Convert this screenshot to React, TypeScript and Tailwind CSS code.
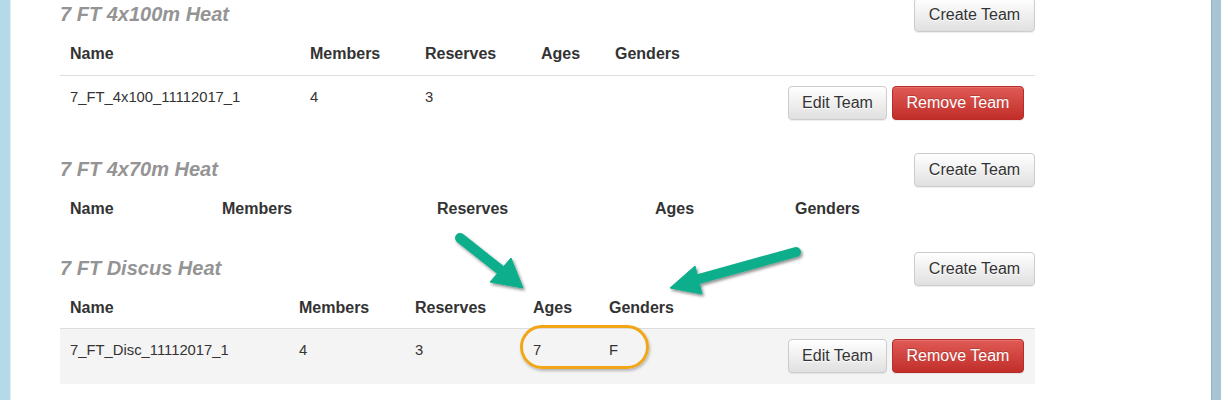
import React from "react";

type Row = { name: string; members: string; reserves: string; ages: string; genders: string };

type Section = {
  title: string;
  widths: number[];
  rows: Row[];
  shaded?: boolean;
};

const sections: Section[] = [
  {
    title: "7 FT 4x100m Heat",
    widths: [240, 115, 116, 74, 110],
    rows: [{ name: "7_FT_4x100_11112017_1", members: "4", reserves: "3", ages: "", genders: "" }],
  },
  {
    title: "7 FT 4x70m Heat",
    widths: [152, 215, 218, 140],
    rows: [],
  },
  {
    title: "7 FT Discus Heat",
    widths: [229, 116, 118, 76, 110],
    rows: [{ name: "7_FT_Disc_11112017_1", members: "4", reserves: "3", ages: "7", genders: "F" }],
    shaded: true,
  },
];

const btnDefault =
  "h-[34px] px-[13px] rounded-[4px] border border-[#ccc] bg-[linear-gradient(to_bottom,#ffffff,#e0e0e0)] text-[16px] leading-none text-[#333] [text-shadow:0_1px_0_#fff] shadow-[inset_0_1px_0_rgba(255,255,255,0.15),0_1px_1px_rgba(0,0,0,0.075)]";
const btnDanger =
  "h-[34px] px-[13px] rounded-[4px] border border-[#b92c28] bg-[linear-gradient(to_bottom,#e05a55,#c12e2a)] text-[16px] leading-none text-white [text-shadow:0_-1px_0_rgba(0,0,0,0.2)] shadow-[inset_0_1px_0_rgba(255,255,255,0.15),0_1px_1px_rgba(0,0,0,0.075)]";

function HeatSection({ s, first }: { s: Section; first?: boolean }) {
  const hasActions = s.widths.length === 5;
  return (
    <div className={first ? "-mt-[2px] mb-[22px]" : "mb-[22px]"}>
      <div className="flex items-center justify-between h-[34px]">
        <h4 className="text-[20px] leading-[22px] font-bold italic text-[#949494] mb-[2px]">{s.title}</h4>
        <button className={btnDefault + " w-[121px]"}>Create Team</button>
      </div>
      <table className="w-full table-fixed border-collapse">
        <colgroup>
          {s.widths.map((w, i) => (
            <col key={i} style={{ width: w }} />
          ))}
          <col />
        </colgroup>
        <thead>
          <tr className="h-[43px]">
            {["Name", "Members", "Reserves", "Ages", "Genders"].map((h) => (
              <th key={h} className="px-[10px] pt-[2px] text-left align-middle text-[16px] leading-[22px] font-bold text-[#333]">
                {h}
              </th>
            ))}
            {hasActions && <th />}
          </tr>
        </thead>
        <tbody>
          {s.rows.map((r) => (
            <tr key={r.name} className={s.shaded ? "bg-[#f4f4f4]" : ""}>
              {[r.name, r.members, r.reserves, r.ages, r.genders].map((v, i) => (
                <td
                  key={i}
                  className="border-t border-[#ddd] px-[10px] pt-[11px] pb-[10px] align-top text-[14.8px] leading-[20px] text-[#333] whitespace-nowrap"
                >
                  {v}
                </td>
              ))}
              <td className="border-t border-[#ddd] pl-[10px] pr-[11px] pt-[10px] pb-[11px] align-top">
                <div className="flex justify-end gap-[5px]">
                  <button className={btnDefault + " w-[99px]"}>Edit Team</button>
                  <button className={btnDanger + " w-[132px]"}>Remove Team</button>
                </div>
              </td>
            </tr>
          ))}
        </tbody>
      </table>
    </div>
  );
}

function Callouts() {
  const green = "#0aae8c";
  return (
    <>
      <svg className="absolute left-0 top-0 pointer-events-none" width="1221" height="400" viewBox="0 0 1221 400">
        <defs>
          <filter id="arrowShadow" x="-20%" y="-20%" width="140%" height="140%">
            <feDropShadow dx="1.5" dy="2" stdDeviation="1.6" floodColor="#000" floodOpacity="0.45" />
          </filter>
        </defs>
        <g filter="url(#arrowShadow)" fill={green} stroke={green}>
          {/* arrow pointing down-right at the Ages column */}
          <line x1="460" y1="238" x2="503" y2="272" strokeWidth="10" strokeLinecap="round" />
          <polygon points="523,288 490,282 511,258" strokeWidth="1" strokeLinejoin="round" />
          {/* arrow pointing left at the Genders column */}
          <line x1="796" y1="252" x2="695" y2="280" strokeWidth="10" strokeLinecap="round" />
          <polygon points="670,288 695,266 702,294" strokeWidth="1" strokeLinejoin="round" />
        </g>
      </svg>
      <div className="absolute left-[520px] top-[325px] w-[129px] h-[44px] rounded-[22px] border-[3px] border-[#f2a515] shadow-[1px_2px_3px_rgba(0,0,0,0.25)] pointer-events-none" />
    </>
  );
}

export default function App() {
  return (
    <div
      className="relative flex w-[1221px] h-[400px] overflow-hidden bg-white"
      style={{ fontFamily: '"Liberation Sans", Arial, sans-serif' }}
    >
      <div className="w-[11px] shrink-0 bg-[#b5d9e9] border-r border-[#dcf0f8]" />
      <main className="flex-1 bg-white pl-[49px]">
        <div className="w-[975px]">
          {sections.map((s, i) => (
            <HeatSection key={s.title} s={s} first={i === 0} />
          ))}
        </div>
      </main>
      <div className="w-[10px] shrink-0 bg-[#a7c5d2] border-l border-[#8fb1c0]" />
      <Callouts />
    </div>
  );
}
